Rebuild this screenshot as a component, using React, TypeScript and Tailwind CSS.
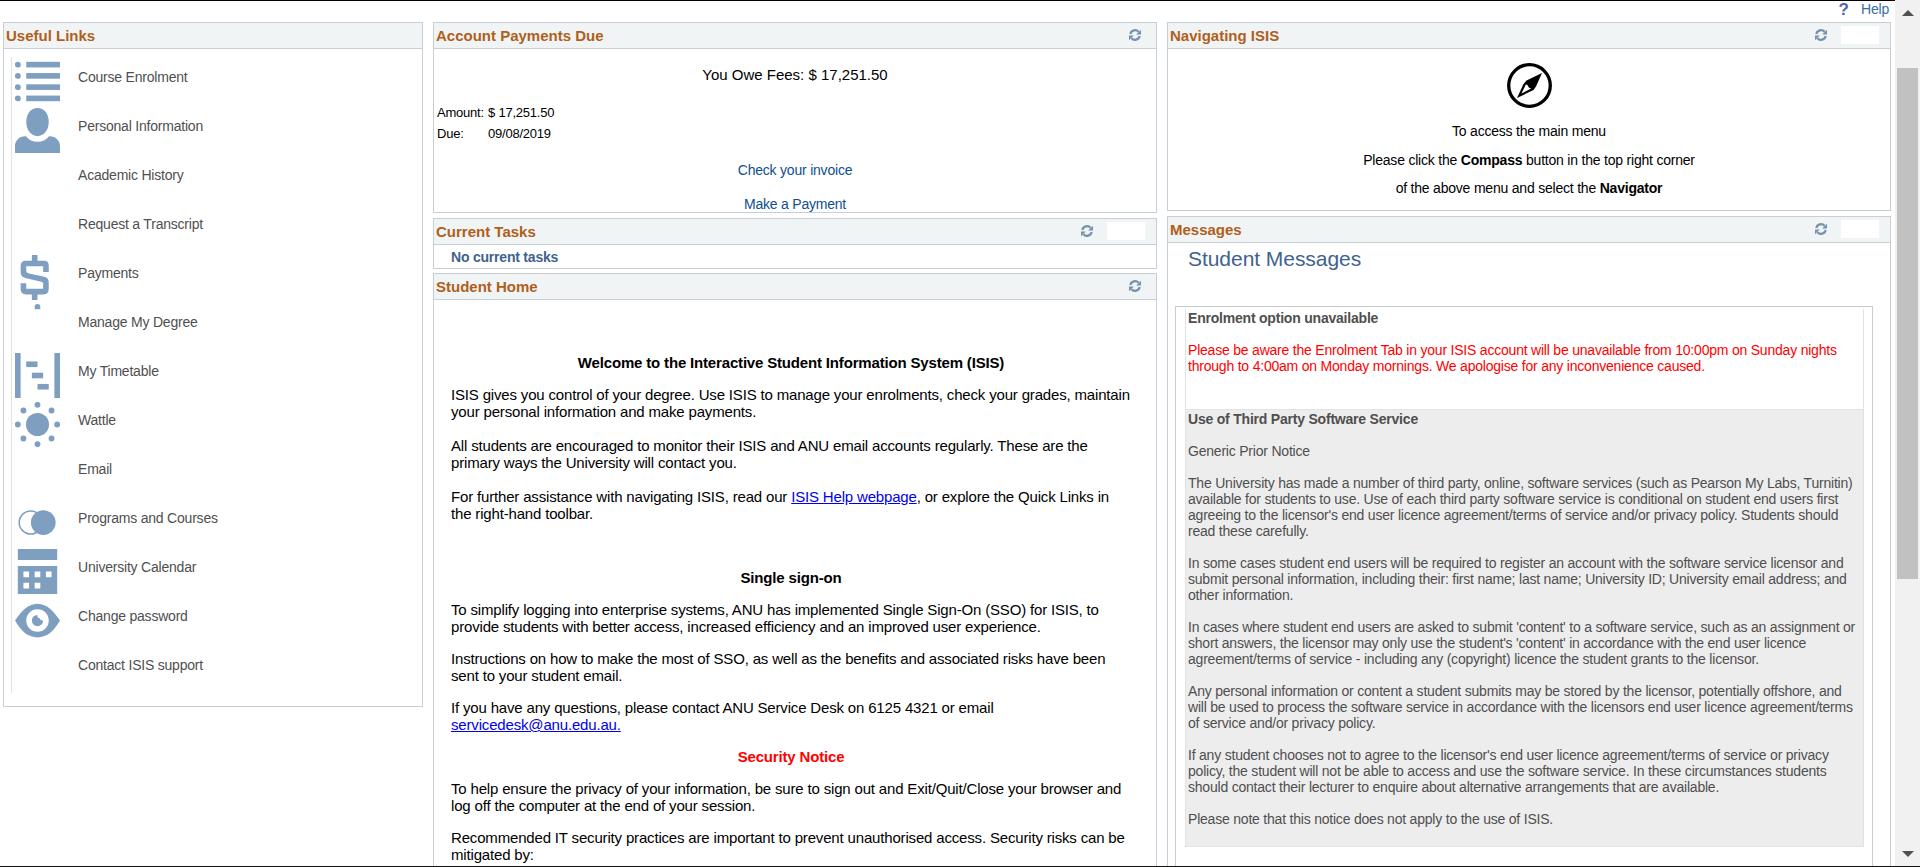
import type { ReactNode } from "react";

const ICON = "#7f9fc1";

function Icon({ children }: { children?: ReactNode }) {
  return (
    <svg viewBox="0 0 16 16" className="block h-[45px] w-[45px] shrink-0" fill={ICON}>
      {children}
    </svg>
  );
}

const links: { label: string; icon?: ReactNode }[] = [
  {
    label: "Course Enrolment",
    icon: [1, 5, 9, 13].map((y) => (
      <g key={y}>
        <circle cx="1" cy={y + 1} r="1.050" />
        <rect x="4" y={y} width="12" height="2" />
      </g>
    )),
  },
  {
    label: "Personal Information",
    icon: (
      <>
        <path d="M8 0C10.300 0 12 1.900 12 5s-1.900 5-4 5-4-2-4-5 1.700-5 4-5z" />
        <path d="M0 16v-2.600C0 11.500 1.700 10 3.600 10h.300C4.900 11.300 6.400 12 8 12s3.100-.7 4.100-2h.3C14.300 10 16 11.500 16 13.400V16z" />
      </>
    ),
  },
  { label: "Academic History" },
  { label: "Request a Transcript" },
  {
    label: "Payments",
    icon: (
      <path d="M6 0h2v2h2.300C11.500 2 12 2.700 12 3.800V6h-2V4H4v1.500c0 .7.3.9 1 1.050l5 1.100c1.400.3 2 .9 2 2.200V12c0 1.300-.6 2-1.800 2H8v2H6v-2H4c-1.300 0-2-.7-2-2V10h2v2h6V10.200c0-.4-.2-.6-.7-.7L4 8.300C2.500 8 2 7.200 2 5.900V4c0-1.300.6-2 1.800-2H6z" />
    ),
  },
  { label: "Manage My Degree", icon: <path d="M7 1.900V1a1 1 0 0 1 2 0v.9z" /> },
  {
    label: "My Timetable",
    icon: (
      <>
        <rect x="0" y="0" width="2" height="16" />
        <rect x="14" y="0" width="2" height="16" />
        <rect x="4" y="3" width="4" height="2" />
        <rect x="6" y="7" width="4" height="2" />
        <rect x="8" y="11" width="4" height="2" />
      </>
    ),
  },
  {
    label: "Wattle",
    icon: (
      <>
        <circle cx="8" cy="8" r="4.100" />
        {[
          [8, 1], [13, 3], [15, 8], [13, 13], [8, 15], [3, 13], [1, 8], [3, 3],
        ].map(([x, y]) => (
          <circle key={`${x}-${y}`} cx={x} cy={y} r="1.050" />
        ))}
      </>
    ),
  },
  { label: "Email" },
  {
    label: "Programs and Courses",
    icon: (
      <>
        <circle cx="5.600" cy="8" r="4.100" fill="none" stroke={ICON} strokeWidth=".55" />
        <circle cx="10.050" cy="8" r="4.400" />
      </>
    ),
  },
  {
    label: "University Calendar",
    icon: (
      <path
        fillRule="evenodd"
        d="M1 0h14v3.900H1zM1 6h14v10H1zM3 8v2h2V8zm4 0v2h2V8zm4 0v2h2V8zM3 12v2h2v-2zm4 0v2h2v-2z"
      />
    ),
  },
  {
    label: "Change password",
    icon: (
      <>
        <path
          fillRule="evenodd"
          d="M0 8C2 5 4.500 2 8 2s6 3 8 6c-2 3.500-4.500 6-8 6s-6-2.500-8-6zM8 4a4 4 0 1 0 0 8a4 4 0 0 0 0-8z"
        />
        <path d="M8 6a2 2 0 1 0 2 2 1 1 0 0 1-1.200-.8A1 1 0 0 1 8 6z" />
      </>
    ),
  },
  { label: "Contact ISIS support" },
];

function Refresh() {
  return (
    <svg viewBox="0 0 12 12" className="block h-3 w-3" fill="none" stroke="#7790ad" strokeWidth="2.200">
      <path d="M1.300 5A4.800 4.800 0 0 1 9.600 2.800" />
      <path d="M10.700 7A4.800 4.800 0 0 1 2.400 9.200" />
      <path d="M12 .8v4.600H7.200z" fill="#7790ad" stroke="none" />
      <path d="M0 11.200V6.600h4.800z" fill="#7790ad" stroke="none" />
    </svg>
  );
}

function Panel({
  title,
  className,
  actions,
  children,
}: {
  title: string;
  className: string;
  actions?: ReactNode;
  children: ReactNode;
}) {
  return (
    <section className={`flex flex-col overflow-hidden border border-[#c7ced6] ${className}`}>
      <header className="flex h-[26px] shrink-0 items-start justify-between border-b border-[#c7ced6] bg-[#f0f4f5] pl-0.5">
        <h2 className="pt-1 text-[15px] leading-[18px] font-bold whitespace-nowrap text-[#b05f1b]">{title}</h2>
        {actions}
      </header>
      {children}
    </section>
  );
}

function Actions({ blank = "" }: { blank?: string }) {
  return (
    <div className={`flex ${blank ? "gap-3.5" : "pr-[15px]"}`}>
      <div className="pt-1.5">
        <Refresh />
      </div>
      {blank && <div className={`mt-[3px] mr-[11px] h-[18px] bg-white ${blank}`} />}
    </div>
  );
}

function Lines({ lines, className = "" }: { lines: ReactNode[]; className?: string }) {
  return (
    <p className={className}>
      {lines.map((line, i) => (
        <span key={i} className="block whitespace-nowrap">
          {line}
        </span>
      ))}
    </p>
  );
}

const notices: string[][] = [
  ["Generic Prior Notice"],
  [
    "The University has made a number of third party, online, software services (such as Pearson My Labs, Turnitin)",
    "available for students to use. Use of each third party software service is conditional on student end users first",
    "agreeing to the licensor's end user licence agreement/terms of service and/or privacy policy. Students should",
    "read these carefully.",
  ],
  [
    "In some cases student end users will be required to register an account with the software service licensor and",
    "submit personal information, including their: first name; last name; University ID; University email address; and",
    "other information.",
  ],
  [
    "In cases where student end users are asked to submit 'content' to a software service, such as an assignment or",
    "short answers, the licensor may only use the student's 'content' in accordance with the end user licence",
    "agreement/terms of service - including any (copyright) licence the student grants to the licensor.",
  ],
  [
    "Any personal information or content a student submits may be stored by the licensor, potentially offshore, and",
    "will be used to process the software service in accordance with the licensors end user licence agreement/terms",
    "of service and/or privacy policy.",
  ],
  [
    "If any student chooses not to agree to the licensor's end user licence agreement/terms of service or privacy",
    "policy, the student will not be able to access and use the software service. In these circumstances students",
    "should contact their lecturer to enquire about alternative arrangements that are available.",
  ],
  ["Please note that this notice does not apply to the use of ISIS."],
];

export default function App() {
  return (
    <div className="flex h-[867px] w-[1920px] flex-col overflow-hidden border-b border-[#111] bg-white font-['Liberation_Sans',Arial,sans-serif] text-black">
      <div className="flex min-h-0 flex-1">
        <div className="flex w-[1895px] flex-col border-t border-black">
          <div className="flex h-[21px] shrink-0 justify-end pr-1.5">
            <span className="mr-3 text-[17px] leading-[18px] font-bold text-[#4f5fb5]">?</span>
            <span className="text-[14px] leading-4 tracking-[-0.200px] text-[#3a6f9f]">Help</span>
          </div>
          <div className="flex min-h-0 flex-1 items-start pl-[3px]">
            <Panel title="Useful Links" className="h-[685px] w-[420px]">
              <ul className="mt-2 ml-[7px] h-[636px] border-l border-[#e2e2e2] pt-0.5 pl-[3px]">
                {links.map((l) => (
                  <li key={l.label} className="flex h-[49px]">
                    <Icon>{l.icon}</Icon>
                    <a className="pt-2.5 pl-[18px] text-[14px] leading-4 tracking-[-0.210px] whitespace-nowrap text-[#4f4f4f]">
                      {l.label}
                    </a>
                  </li>
                ))}
              </ul>
            </Panel>

            <div className="ml-2.5 flex w-[724px] flex-col">
              <Panel title="Account Payments Due" className="h-[191px]" actions={<Actions />}>
                <div className="pt-[17px] text-center text-[15px] leading-[18px]">You Owe Fees: $ 17,251.50</div>
                <dl className="mt-[18px] grid grid-cols-[51px_auto] pl-[3px] text-[13px] leading-[21px] tracking-[-0.230px]">
                  <dt>Amount:</dt>
                  <dd>$ 17,251.50</dd>
                  <dt>Due:</dt>
                  <dd>09/08/2019</dd>
                </dl>
                <div className="mt-[9px] text-center text-[14px] leading-[34px] tracking-[-0.210px] text-[#114e8f]">
                  <div>Check your invoice</div>
                  <div>Make a Payment</div>
                </div>
              </Panel>
              <Panel title="Current Tasks" className="mt-[5px] h-[51px]" actions={<Actions blank="w-[38px]" />}>
                <div className="pt-1 pl-[17px] text-[14px] leading-4 font-bold tracking-[-0.210px] text-[#41628e]">
                  No current tasks
                </div>
              </Panel>
              <Panel title="Student Home" className="mt-1 h-[620px]" actions={<Actions />}>
                <div className="w-[697px] pt-[54px] pl-[17px] text-[15px] leading-[17px] tracking-[-0.170px]">
                  <h3 className="text-center font-bold">Welcome to the Interactive Student Information System (ISIS)</h3>
                  <Lines
                    className="mt-[15px]"
                    lines={[
                      "ISIS gives you control of your degree. Use ISIS to manage your enrolments, check your grades, maintain",
                      "your personal information and make payments.",
                    ]}
                  />
                  <Lines
                    className="mt-[17px]"
                    lines={[
                      "All students are encouraged to monitor their ISIS and ANU email accounts regularly. These are the",
                      "primary ways the University will contact you.",
                    ]}
                  />
                  <Lines
                    className="mt-[17px]"
                    lines={[
                      <>
                        For further assistance with navigating ISIS, read our{" "}
                        <a className="text-[#0000ee] underline">ISIS Help webpage</a>, or explore the Quick Links in
                      </>,
                      "the right-hand toolbar.",
                    ]}
                  />
                  <h3 className="mt-[47px] text-center font-bold">Single sign-on</h3>
                  <Lines
                    className="mt-[15px]"
                    lines={[
                      "To simplify logging into enterprise systems, ANU has implemented Single Sign-On (SSO) for ISIS, to",
                      "provide students with better access, increased efficiency and an improved user experience.",
                    ]}
                  />
                  <Lines
                    className="mt-[15px]"
                    lines={[
                      "Instructions on how to make the most of SSO, as well as the benefits and associated risks have been",
                      "sent to your student email.",
                    ]}
                  />
                  <Lines
                    className="mt-[15px]"
                    lines={[
                      "If you have any questions, please contact ANU Service Desk on 6125 4321 or email",
                      <a className="text-[#0000ee] underline">servicedesk@anu.edu.au.</a>,
                    ]}
                  />
                  <h3 className="mt-[15px] text-center font-bold text-[#ff0000]">Security Notice</h3>
                  <Lines
                    className="mt-[15px]"
                    lines={[
                      "To help ensure the privacy of your information, be sure to sign out and Exit/Quit/Close your browser and",
                      "log off the computer at the end of your session.",
                    ]}
                  />
                  <Lines
                    className="mt-[15px]"
                    lines={[
                      "Recommended IT security practices are important to prevent unauthorised access. Security risks can be",
                      "mitigated by:",
                    ]}
                  />
                </div>
              </Panel>
            </div>

            <div className="ml-2.5 flex w-[724px] flex-col">
              <Panel title="Navigating ISIS" className="h-[189px]" actions={<Actions blank="w-[38px]" />}>
                <div className="flex flex-col items-center pt-3.5 text-[14px] leading-4 tracking-[-0.210px]">
                  <svg viewBox="0 0 45 45" className="block h-[45px] w-[45px]">
                    <circle cx="22.500" cy="22.500" r="20.800" fill="none" stroke="#000" strokeWidth="3.300" />
                    <path
                      fillRule="evenodd"
                      d="M35 10L29 23.500 26.500 27 10 35 16.500 21 19.500 17.500zM18.800 21.500L14.500 30.500 24 25.500 21.800 24.500 20.500 22z"
                    />
                  </svg>
                  <div className="mt-[15px]">To access the main menu</div>
                  <div className="mt-[13px]">
                    Please click the <b>Compass</b> button in the top right corner
                  </div>
                  <div className="mt-3">
                    of the above menu and select the <b>Navigator</b>
                  </div>
                </div>
              </Panel>
              <Panel title="Messages" className="mt-[5px] h-[680px]" actions={<Actions blank="w-[38px]" />}>
                <h1 className="pt-1 pl-5 text-[21px] leading-6 tracking-[-0.050px] text-[#41628e]">Student Messages</h1>
                <div className="mt-[35px] ml-[7px] h-[600px] w-[698px] border border-[#c7ced6] pt-0.5 pl-[9px] text-[14px] leading-4 tracking-[-0.210px] text-[#4f4f4f]">
                  <div className="h-[101px] w-[679px] border-x border-b border-[#e2e2e2] pt-px pl-0.5">
                    <h3 className="font-bold">Enrolment option unavailable</h3>
                    <Lines
                      className="mt-4 text-[#ff0000]"
                      lines={[
                        "Please be aware the Enrolment Tab in your ISIS account will be unavailable from 10:00pm on Sunday nights",
                        "through to 4:00am on Monday mornings. We apologise for any inconvenience caused.",
                      ]}
                    />
                  </div>
                  <div className="h-[437px] w-[679px] border-x border-b border-[#e2e2e2] bg-[#ededed] pt-px pl-0.5">
                    <h3 className="font-bold">Use of Third Party Software Service</h3>
                    {notices.map((n) => (
                      <Lines key={n[0]} className="mt-4" lines={n} />
                    ))}
                  </div>
                </div>
              </Panel>
            </div>
          </div>
        </div>
        <div className="flex w-[25px] flex-col items-center bg-[#f1f1f1] pt-2.5 pb-[9px]">
          <svg viewBox="0 0 12 6" className="h-1.5 w-3" fill="#505050">
            <path d="M0 6L6 0l6 6z" />
          </svg>
          <div className="mt-[52px] h-[511px] w-[21px] bg-[#c1c1c1]" />
          <svg viewBox="0 0 12 6" className="mt-auto h-1.5 w-3" fill="#505050">
            <path d="M0 0h12L6 6z" />
          </svg>
        </div>
      </div>
    </div>
  );
}
